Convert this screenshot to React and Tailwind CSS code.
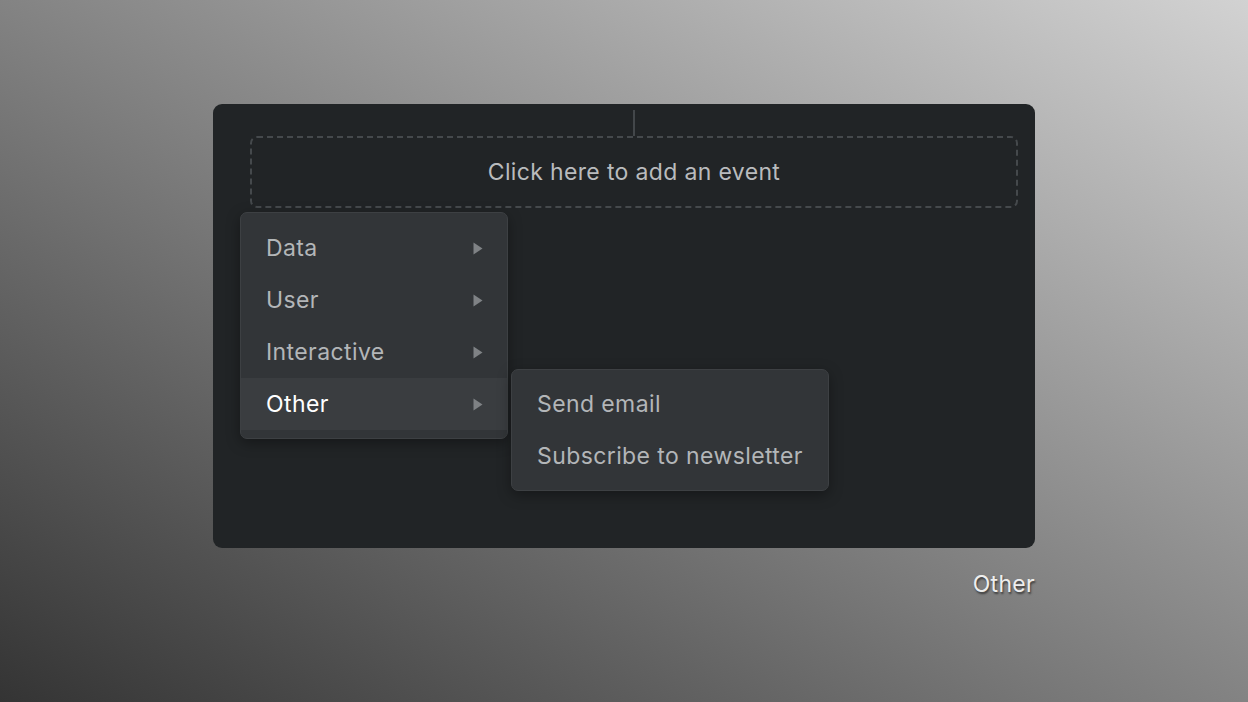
import React from 'react';

const items = ['Data', 'User', 'Interactive', 'Other'];
const subItems = ['Send email', 'Subscribe to newsletter'];

const Arrow = () => (
  <svg width="10" height="13" viewBox="0 0 10 13" className="shrink-0">
    <path d="M0.5 0.5 L9.5 6.5 L0.5 12.5 Z" fill="#7f8285" />
  </svg>
);

export default function App() {
  const font = { fontFamily: 'Inter, "Noto Sans", "Liberation Sans", sans-serif' };

  return (
    <div
      className="w-full h-[702px] flex flex-col items-center pt-[104px] bg-[linear-gradient(to_top_right,#343434,#d2d2d2)]"
      style={font}
    >
      <div className="w-[822px] flex flex-col">
        {/* Canvas panel */}
        <div className="relative h-[444px] rounded-[9px] bg-[#212426] pt-[6px] pl-[37px] pr-[17px]">
          <div className="flex justify-center">
            <div className="w-[2px] h-[26px] bg-[#43474a]" />
          </div>
          <div className="h-[72px] rounded-[7px] border-2 border-dashed border-[#45494c] flex items-center justify-center text-[23px] tracking-[0.35px] text-[#b9bbbd]">
            Click here to add an event
          </div>

          {/* Dropdown menu */}
          <div className="absolute left-[27px] top-[108px] w-[268px] rounded-[7px] border border-[#3d4043] bg-[#323538] pt-[9px] pb-[8px] shadow-[0_4px_14px_rgba(0,0,0,0.35)]">
            {items.map((label) => {
              const active = label === 'Other';
              return (
                <div
                  key={label}
                  className={`h-[52px] flex items-center justify-between pl-[25px] pr-[24px] text-[23px] tracking-[0.4px] ${
                    active ? 'bg-[#3a3d40] text-white' : 'text-[#b3b6b8]'
                  }`}
                >
                  <span>{label}</span>
                  <Arrow />
                </div>
              );
            })}
          </div>

          {/* Submenu */}
          <div className="absolute left-[298px] top-[265px] w-[318px] rounded-[7px] border border-[#3d4043] bg-[#323538] py-[8px] shadow-[0_4px_14px_rgba(0,0,0,0.35)]">
            {subItems.map((label) => (
              <div key={label} className="h-[52px] flex items-center pl-[25px] text-[23px] tracking-[0.4px] text-[#b3b6b8]">
                {label}
              </div>
            ))}
          </div>
        </div>

        {/* Caption */}
        <div className="mt-[23px] text-right text-[23px] leading-[26px] tracking-[0.3px] text-[#eeeeee] [text-shadow:1px_2px_2px_rgba(0,0,0,0.55)]">
          Other
        </div>
      </div>
    </div>
  );
}
